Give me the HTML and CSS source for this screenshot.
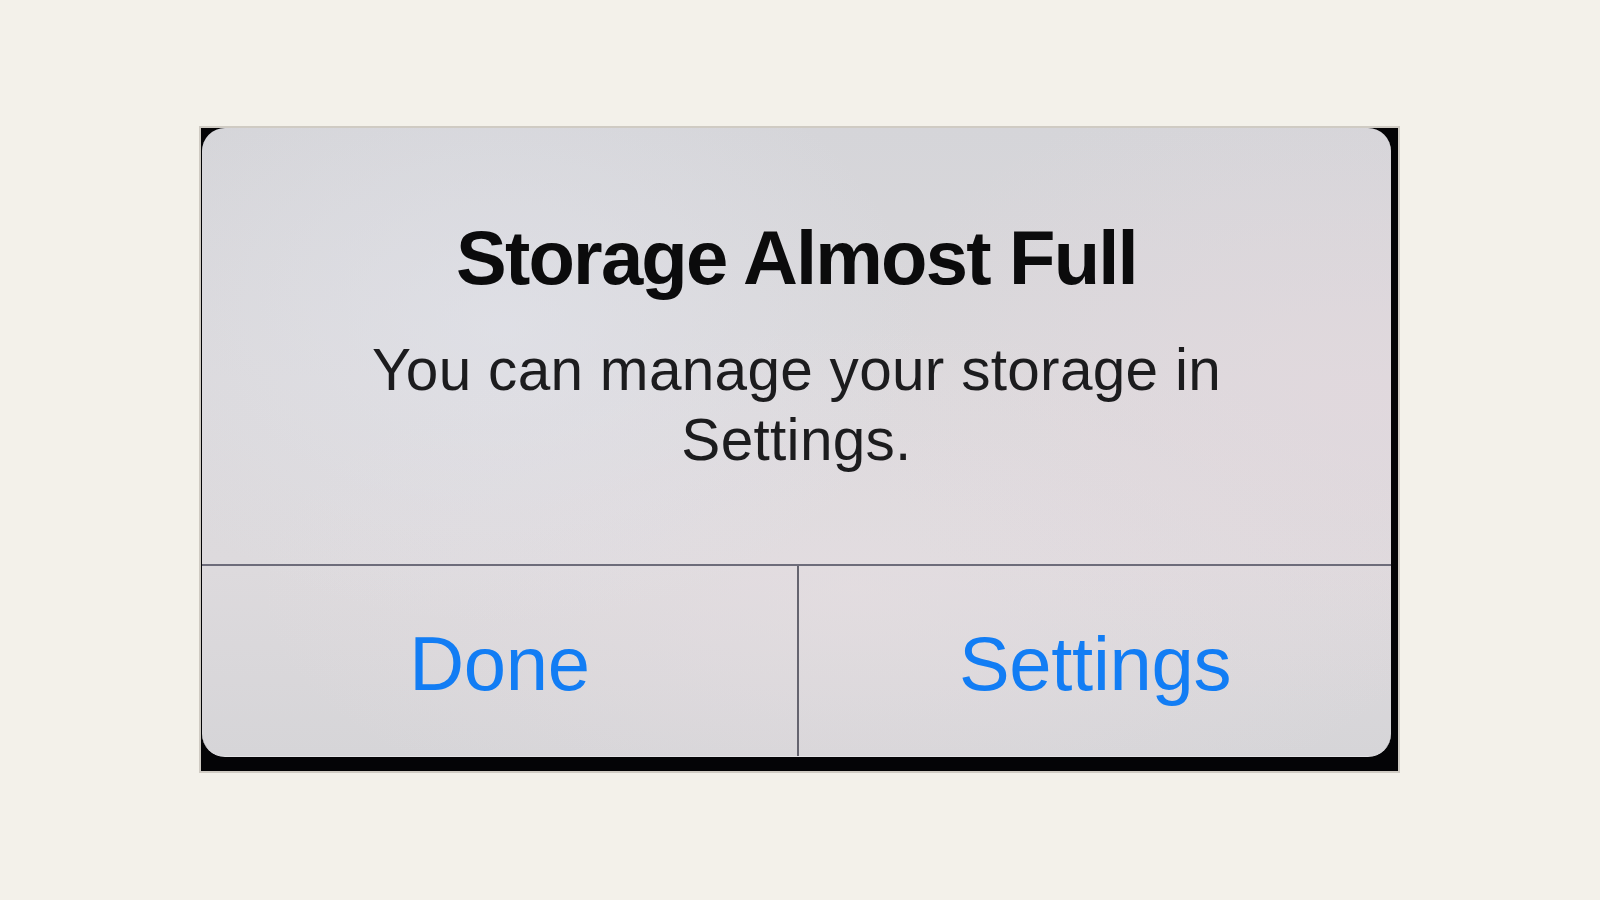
FILE: index.html
```html
<!DOCTYPE html>
<html lang="en">
<head>
<meta charset="utf-8">
<title>Storage Almost Full</title>
<link rel="stylesheet" href="styles.css">
</head>
<body>
  <div class="frame">
    <div class="alert">
      <div class="alert-body">
        <h1 class="alert-title">Storage Almost Full</h1>
        <p class="alert-message">You can manage your storage in<br>Settings.</p>
      </div>
      <div class="alert-actions">
        <div class="alert-button">Done</div>
        <div class="alert-divider"></div>
        <div class="alert-button">Settings</div>
      </div>
    </div>
  </div>
</body>
</html>
```

FILE: styles.css
```css
html, body {
  margin: 0;
  padding: 0;
}

body {
  width: 1600px;
  height: 900px;
  background: #f3f1ea;
  font-family: "Liberation Sans", Arial, sans-serif;
  padding-top: 126px;
  padding-left: 199px;
  box-sizing: border-box;
}

.frame {
  width: 1201px;
  height: 647px;
  box-sizing: border-box;
  border: 2px solid #cfcbc3;
  background: #040406;
  padding: 0 7px 14px 1px;
  display: flex;
}

.alert {
  flex: 1;
  display: flex;
  flex-direction: column;
  border-radius: 23px;
  overflow: hidden;
  border-bottom: 1px solid #e4e3e6;
  background:
    radial-gradient(ellipse 420px 300px at 300px 200px, rgba(226, 228, 236, 0.6), rgba(226, 228, 236, 0) 100%),
    radial-gradient(ellipse 500px 320px at 1150px 260px, rgba(228, 216, 222, 0.6), rgba(228, 216, 222, 0) 100%),
    radial-gradient(ellipse 600px 260px at 650px 460px, rgba(230, 222, 226, 0.6), rgba(230, 222, 226, 0) 100%),
    linear-gradient(180deg, #d5d5d9 0%, #dbd9dc 40%, #dddadd 70%, #d6d5d8 100%);
}

.alert-body {
  height: 436px;
  box-sizing: border-box;
  padding-top: 92px;
  text-align: center;
}

.alert-title {
  margin: 0;
  font-size: 76px;
  line-height: 76px;
  font-weight: bold;
  letter-spacing: -1.8px;
  color: #0b0b0c;
}

.alert-message {
  margin: 39px 0 0;
  font-size: 58.5px;
  line-height: 70px;
  letter-spacing: 0.3px;
  color: #1c1c1e;
}

.alert-actions {
  flex: 1;
  display: grid;
  grid-template-columns: 595px 2px 1fr;
  border-top: 2px solid #6d6c7a;
}

.alert-divider {
  background: #65646f;
}

.alert-button {
  display: flex;
  align-items: center;
  justify-content: center;
  padding-top: 6px;
  font-size: 76px;
  line-height: 76px;
  letter-spacing: -0.3px;
  color: #127df4;
}
```
